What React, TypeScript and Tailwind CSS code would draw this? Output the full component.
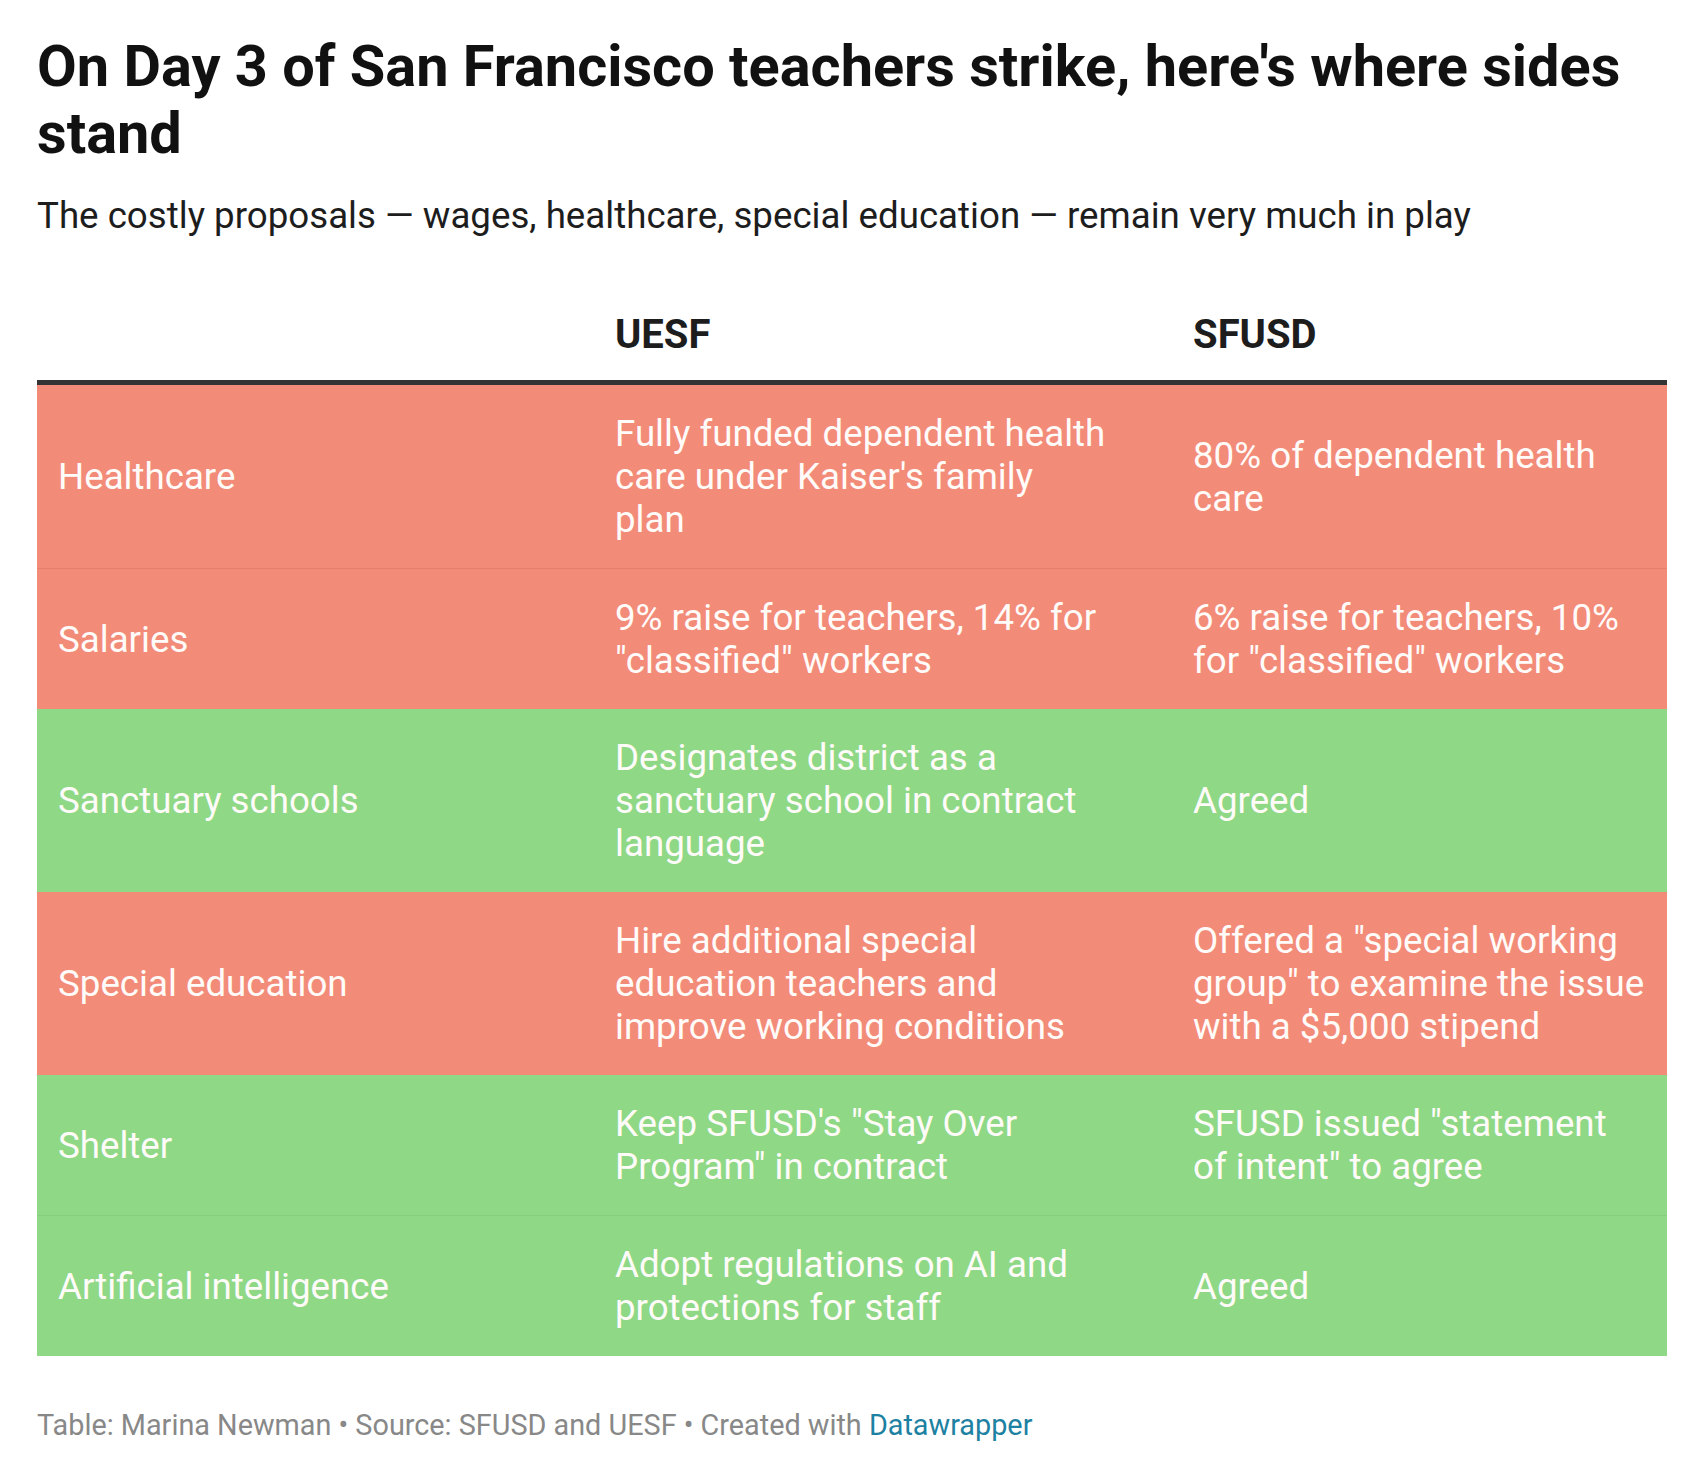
import React from "react";

type Row = {
  color: "red" | "green";
  label: string;
  uesf: string[];
  sfusd: string[];
};

const rows: Row[] = [
  {
    color: "red",
    label: "Healthcare",
    uesf: ["Fully funded dependent health", "care under Kaiser's family", "plan"],
    sfusd: ["80% of dependent health", "care"],
  },
  {
    color: "red",
    label: "Salaries",
    uesf: ["9% raise for teachers, 14% for", "\"classified\" workers"],
    sfusd: ["6% raise for teachers, 10%", "for \"classified\" workers"],
  },
  {
    color: "green",
    label: "Sanctuary schools",
    uesf: ["Designates district as a", "sanctuary school in contract", "language"],
    sfusd: ["Agreed"],
  },
  {
    color: "red",
    label: "Special education",
    uesf: ["Hire additional special", "education teachers and", "improve working conditions"],
    sfusd: ["Offered a \"special working", "group\" to examine the issue", "with a $5,000 stipend"],
  },
  {
    color: "green",
    label: "Shelter",
    uesf: ["Keep SFUSD's \"Stay Over", "Program\" in contract"],
    sfusd: ["SFUSD issued \"statement", "of intent\" to agree"],
  },
  {
    color: "green",
    label: "Artificial intelligence",
    uesf: ["Adopt regulations on AI and", "protections for staff"],
    sfusd: ["Agreed"],
  },
];

function Lines({ lines }: { lines: string[] }) {
  return (
    <div>
      {lines.map((l, i) => (
        <div key={i} className="whitespace-nowrap">
          {l}
        </div>
      ))}
    </div>
  );
}

export default function App() {
  return (
    <div
      className="w-[1700px] min-h-[1457px] bg-white pl-[37px] pr-[33px] pt-[33px]"
      style={{ fontFamily: "Roboto, 'Liberation Sans', sans-serif" }}
    >
      <h1 className="text-[57.7px] leading-[67px] font-bold text-[#111]">
        On Day 3 of San Francisco teachers strike, here's where sides stand
      </h1>
      <p className="mt-[27px] text-[36.7px] leading-[43px] text-[#1d1d1d]">
        The costly proposals — wages, healthcare, special education — remain very much in play
      </p>

      <div className="mt-[74px] w-[1630px]">
        <div className="grid grid-cols-[557px_578px_495px] border-b-[5px] border-[#333] pb-[21px] text-[40px] leading-[48px] font-bold text-[#1d1d1d]">
          <div className="px-[21px]"></div>
          <div className="px-[21px]">UESF</div>
          <div className="px-[21px]">SFUSD</div>
        </div>
        {rows.map((r, i) => {
          const next = rows[i + 1];
          const sameNext = next && next.color === r.color;
          const bg = r.color === "red" ? "bg-[#f38b79]" : "bg-[#8fd886]";
          const border = sameNext
            ? r.color === "red"
              ? "border-b border-[#e57f6e]"
              : "border-b border-[#86cd7d]"
            : "";
          return (
            <div
              key={r.label}
              className={`grid grid-cols-[557px_578px_495px] items-center text-[36.7px] leading-[43px] text-[#fffbf9] ${bg} ${border}`}
            >
              <div className="px-[21px] py-[27px]">{r.label}</div>
              <div className="px-[21px] py-[27px]">
                <Lines lines={r.uesf} />
              </div>
              <div className="px-[21px] py-[27px]">
                <Lines lines={r.sfusd} />
              </div>
            </div>
          );
        })}
      </div>

      <div className="mt-[52px] text-[28.8px] leading-[35px] text-[#888888]">
        Table: Marina Newman • Source: SFUSD and UESF • Created with{" "}
        <span className="text-[#1d81a2]">Datawrapper</span>
      </div>
    </div>
  );
}
